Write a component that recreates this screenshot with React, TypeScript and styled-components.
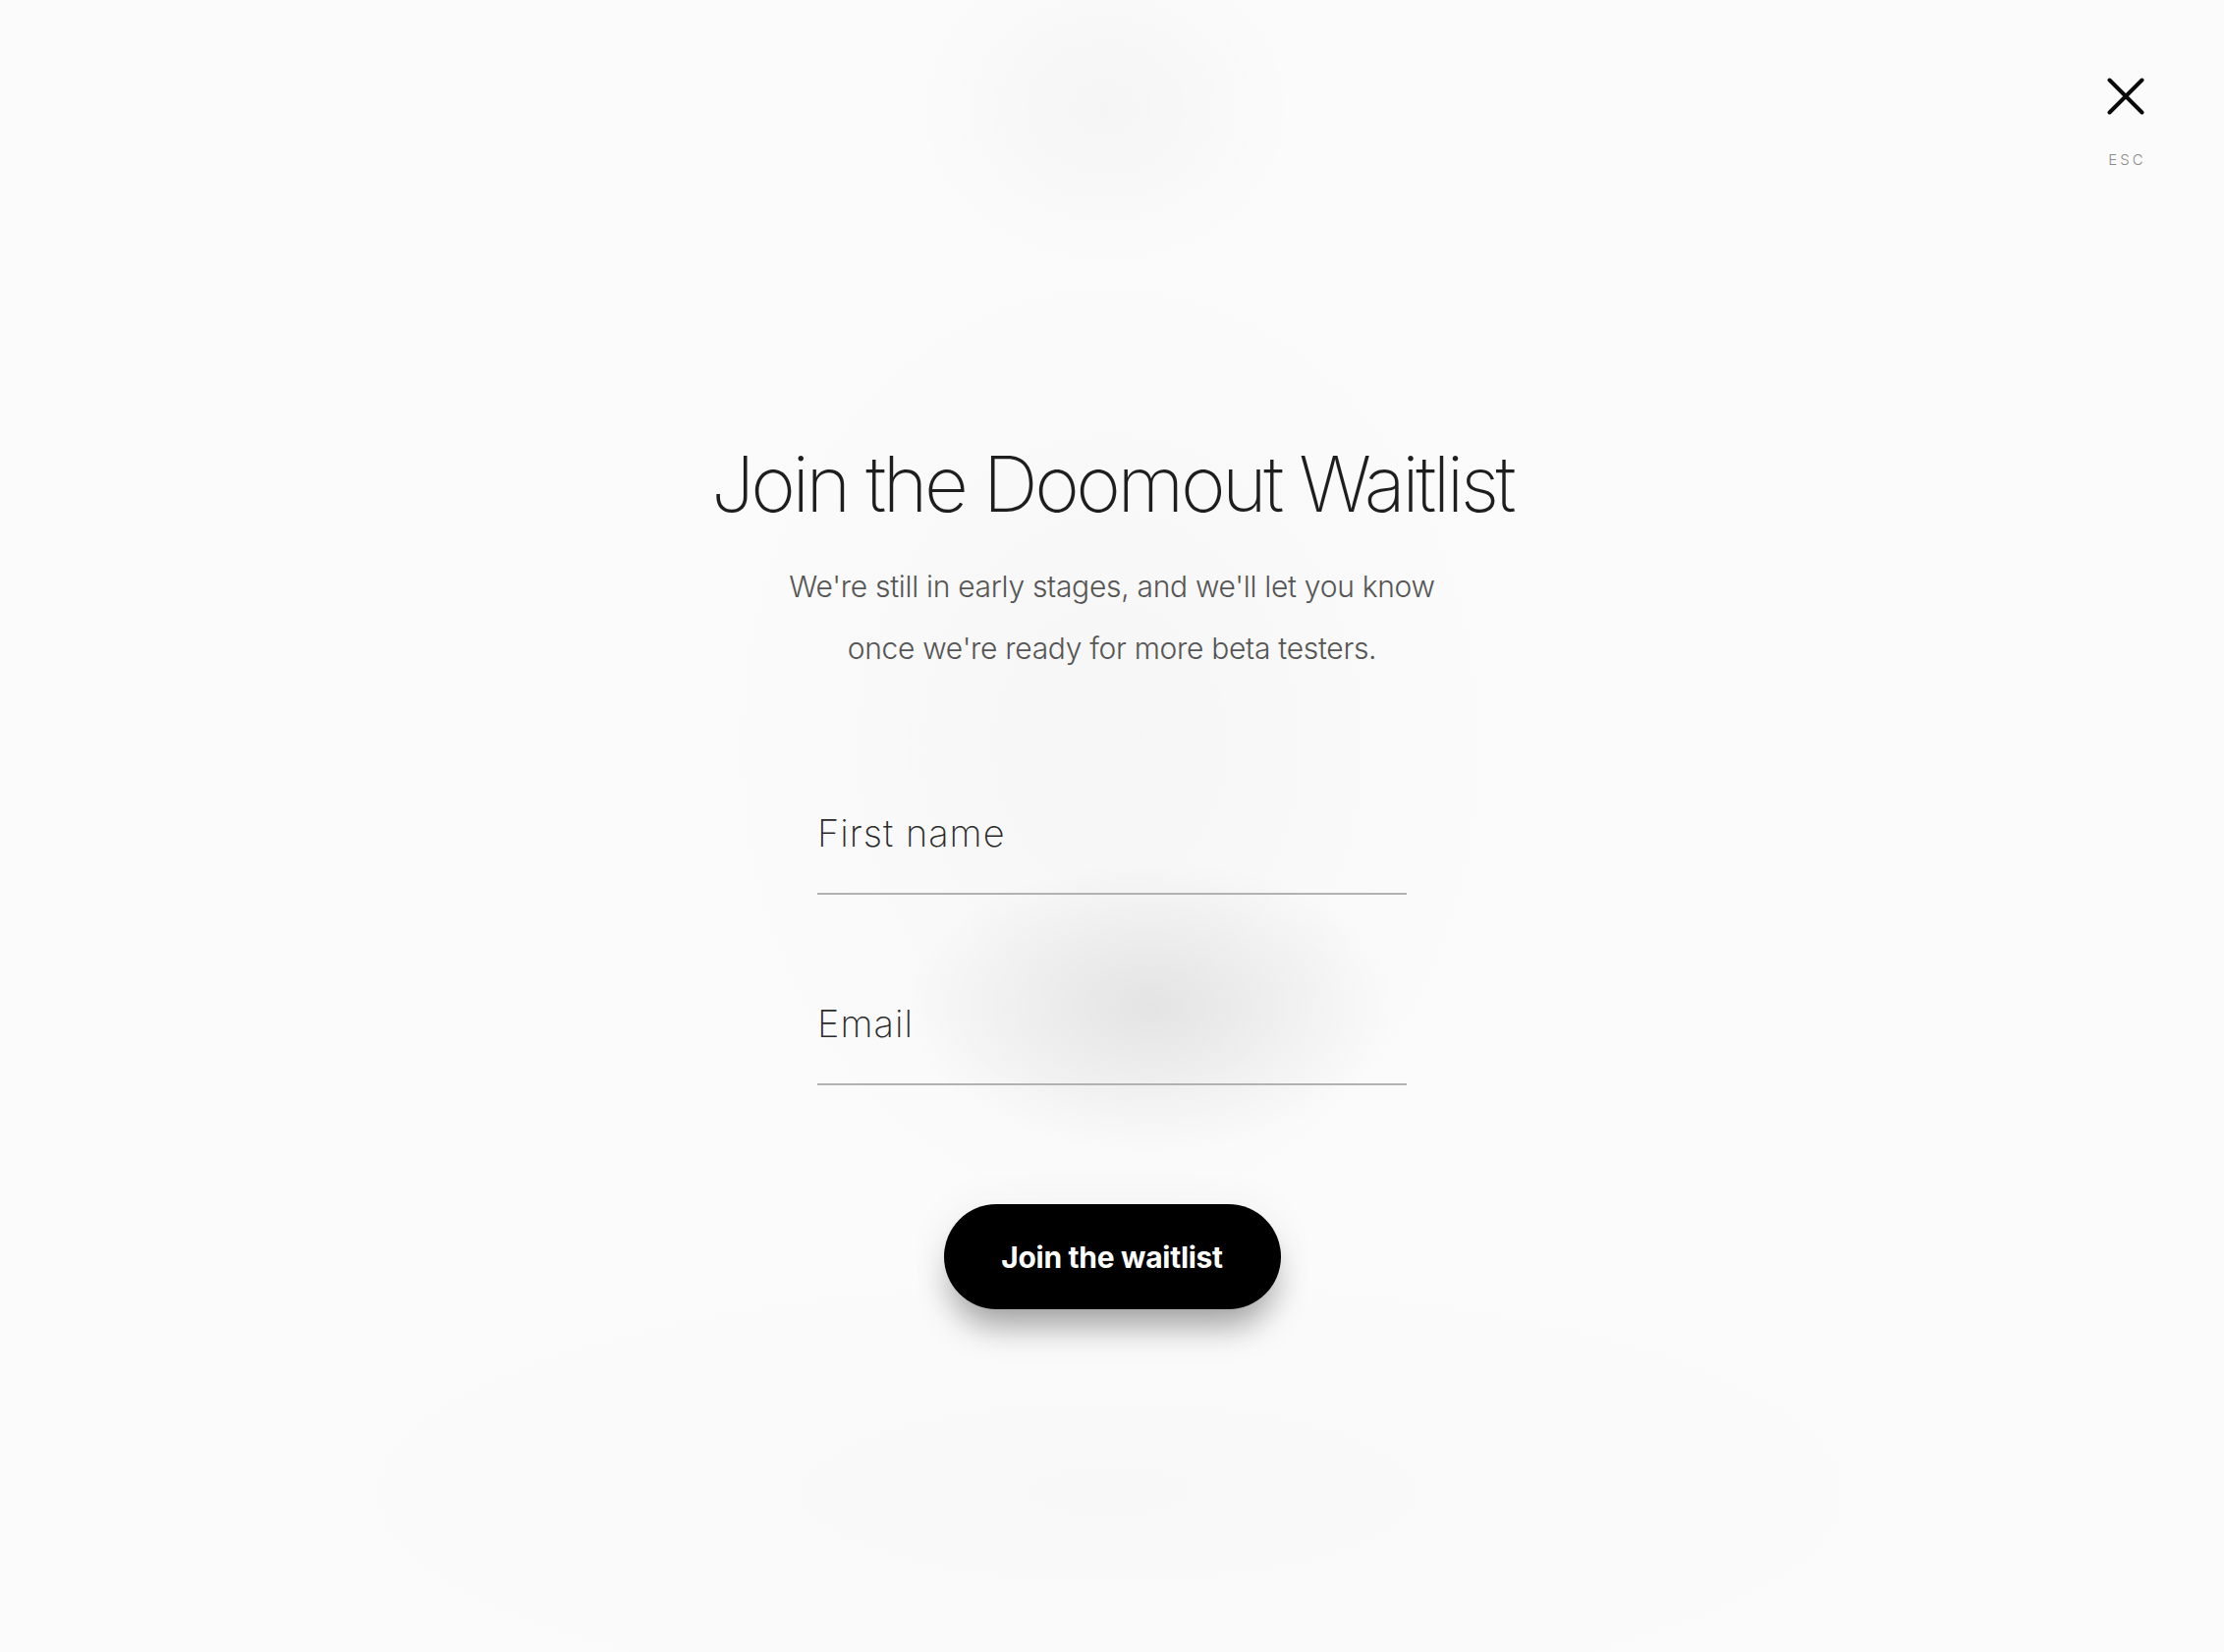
import React from "react";
import styled, { createGlobalStyle } from "styled-components";

const GlobalStyle = createGlobalStyle`
  html, body {
    margin: 0;
    padding: 0;
    background: #fbfbfb;
  }
  * { box-sizing: border-box; }
`;

const Page = styled.div`
  min-height: 1682px;
  display: flex;
  flex-direction: column;
  font-family: Inter, "Liberation Sans", sans-serif;
  color: #1f1f1f;
  background:
    radial-gradient(ellipse 250px 150px at 1172px 1025px, rgba(0,0,0,0.085), rgba(0,0,0,0) 100%),
    radial-gradient(ellipse 200px 170px at 1125px 110px, rgba(0,0,0,0.022), rgba(0,0,0,0) 100%),
    radial-gradient(ellipse 420px 520px at 1130px 760px, rgba(0,0,0,0.018), rgba(0,0,0,0) 100%),
    radial-gradient(ellipse 900px 260px at 1130px 1520px, rgba(0,0,0,0.012), rgba(0,0,0,0) 100%),
    #fbfbfb;
`;

const TopBar = styled.header`
  display: flex;
  justify-content: flex-end;
  padding: 79px 81px 0 0;
`;

const CloseButton = styled.button`
  display: flex;
  flex-direction: column;
  align-items: center;
  gap: 37px;
  width: 38px;
  padding: 0;
  border: none;
  background: none;
  cursor: pointer;
`;

const EscLabel = styled.span`
  font-family: Inter, "Liberation Sans", sans-serif;
  font-size: 15px;
  line-height: 18px;
  letter-spacing: 3px;
  margin-right: -3px;
  color: #8a8a8a;
  font-weight: 300;
`;

const Main = styled.main`
  display: flex;
  flex-direction: column;
  align-items: center;
  margin-top: 278px;
`;

const Title = styled.h1`
  margin: 0;
  font-family: Inter, "Liberation Sans", sans-serif;
  font-weight: 200;
  font-size: 78px;
  line-height: 86px;
  letter-spacing: -3.5px;
  color: #1e1e1e;
  white-space: nowrap;
`;

const Subtitle = styled.p`
  margin: 30px 0 0;
  font-family: Inter, "Liberation Sans", sans-serif;
  font-weight: 300;
  font-size: 30px;
  line-height: 63px;
  letter-spacing: -0.3px;
  color: #555;
  text-align: center;
`;

const Form = styled.form`
  display: flex;
  flex-direction: column;
  align-items: center;
  margin-top: 136px;
`;

const Field = styled.input`
  display: block;
  width: 600px;
  height: 83px;
  padding: 0 0 42px 0;
  border: none;
  border-bottom: 2px solid #b2b2b2;
  background: transparent;
  outline: none;
  font-family: Inter, "Liberation Sans", sans-serif;
  font-weight: 200;
  font-size: 38px;
  letter-spacing: 1px;
  color: #222;
  & + & { margin-top: 111px; }
  &::placeholder { color: #2a2a2a; opacity: 1; }
`;

const Submit = styled.button`
  margin-top: 121px;
  width: 343px;
  height: 107px;
  border: none;
  border-radius: 54px;
  background: #000;
  color: #fff;
  font-family: Inter, "Liberation Sans", sans-serif;
  font-weight: 700;
  font-size: 30px;
  letter-spacing: -0.3px;
  cursor: pointer;
  box-shadow:
    0 24px 34px -8px rgba(0, 0, 0, 0.36),
    0 0 30px 18px rgba(0, 0, 0, 0.018);
`;

const CloseIcon = () => (
  <svg width="38" height="38" viewBox="0 0 38 38" fill="none">
    <path d="M2.5 2.5 L35.5 35.5 M35.5 2.5 L2.5 35.5" stroke="#0a0a0a" strokeWidth="4" strokeLinecap="round" />
  </svg>
);

export default function App() {
  return (
    <>
      <GlobalStyle />
      <Page>
        <TopBar>
          <CloseButton type="button" aria-label="Close">
            <CloseIcon />
            <EscLabel>ESC</EscLabel>
          </CloseButton>
        </TopBar>
        <Main>
          <Title>Join the Doomout Waitlist</Title>
          <Subtitle>
            We're still in early stages, and we'll let you know
            <br />
            once we're ready for more beta testers.
          </Subtitle>
          <Form onSubmit={(e) => e.preventDefault()}>
            <Field type="text" placeholder="First name" />
            <Field type="email" placeholder="Email" />
            <Submit type="submit">Join the waitlist</Submit>
          </Form>
        </Main>
      </Page>
    </>
  );
}
